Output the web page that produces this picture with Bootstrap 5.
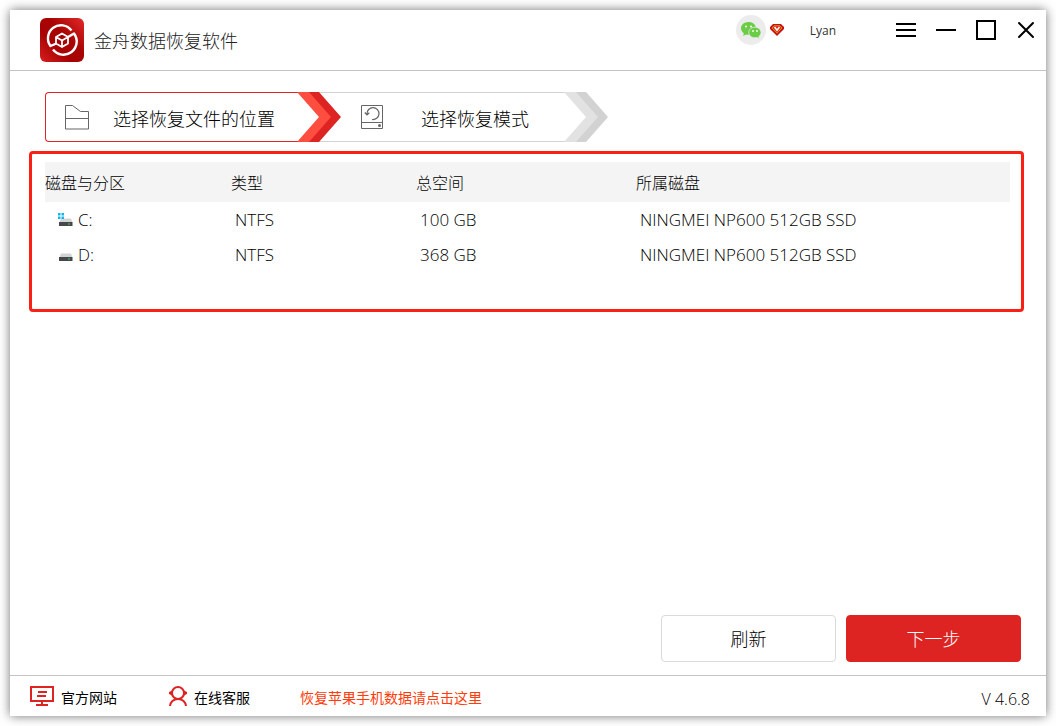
<!DOCTYPE html>
<html lang="zh-CN">
<head>
<meta charset="utf-8">
<meta name="viewport" content="width=device-width, initial-scale=1">
<title>金舟数据恢复软件</title>
<link rel="stylesheet" href="https://cdn.jsdelivr.net/npm/bootstrap@5.3.0/dist/css/bootstrap.min.css">
<style>
  body { font-family: "Open Sans", "Noto Sans CJK SC", sans-serif; font-size: 16px; color: #000; background: #fff; padding: 10px; }
  .zh-text { font-family: "Noto Sans CJK SC", sans-serif; font-weight: 300; }
  svg { display: block; flex: none; }
  .app-window { min-height: calc(100vh - 20px); background: #fff; box-shadow: 0 0 10px rgba(0, 0, 0, .55); }
  .title-bar { height: 61px; padding-left: 30px; border-bottom: 1px solid #c3c3c3; }
  .app-name { font-size: 18px; color: #222; margin-left: 10px; }
  .account-area { margin-right: 50px; height: 40px; }
  .avatar-disc { width: 30px; height: 30px; background: #ececec; }
  .user-name { font-size: 12px; color: #333; margin-left: 26px; padding-top: 2px; }
  .window-btn { width: 40px; height: 40px; }
  .app-main { padding: 21px 25px 13px 19px; }
  .step-bar { margin-left: 16px; height: 50px; }
  .step-item { height: 50px; font-size: 18px; border: 1px solid #d2d2d2; background: #fff; color: #000; }
  .step-current { width: 274px; padding-left: 19px; border-color: #dd2422; border-right: 0; border-radius: 4px 0 0 4px; }
  .step-next { width: 267px; padding-left: 42px; border-left: 0; border-right: 0; }
  .step-arrow { position: absolute; top: -1px; left: 100%; margin-left: -22px; z-index: 1; }
  .step-label { padding-top: 2px; }
  .step-current .step-label { margin-left: 23px; }
  .step-next .step-label { margin-left: 37px; }
  .disk-frame { margin-top: 9px; margin-right: -3px; min-height: 161px; border: 3px solid #fb2015; border-radius: 4px; padding: 8px 11px 8px 13px; }
  .disk-table { table-layout: fixed; }
  .disk-table th { height: 40px; background: #f4f4f4; font-weight: 300; padding: 0; vertical-align: middle; line-height: 24px; }
  .disk-table td { height: 35px; padding: 0 0 0 4px; vertical-align: middle; line-height: 24px; font-size: 17px; font-weight: 300; }
  .disk-table td:first-child { padding-left: 12px; }
  .drive-name { margin-left: 5px; }
  .col-part { width: 186px; }
  .col-kind { width: 185px; }
  .col-size { width: 220px; }
  .action-btn { width: 175px; height: 47px; font-size: 18px; border-radius: 4px; --bs-btn-font-weight: 300; }
  .action-row { gap: 10px; }
  .btn-refresh { --bs-btn-color: #000; --bs-btn-bg: #fff; --bs-btn-border-color: #dadada; --bs-btn-hover-bg: #f4f4f4; --bs-btn-hover-border-color: #dadada; }
  .btn-forward { --bs-btn-color: #fff; --bs-btn-bg: #dd2422; --bs-btn-border-color: #dd2422; --bs-btn-hover-bg: #c51d1b; --bs-btn-hover-color: #fff; --bs-btn-hover-border-color: #c51d1b; }
  .status-bar { height: 41px; padding: 0 16px 0 20px; border-top: 1px solid #c3c3c3; font-size: 14px; }
  .status-bar a { color: #000; text-decoration: none; }
  .status-bar a span, .promo-link { margin-left: 7px; padding-top: 2px; }
  .status-bar .support-link { margin-left: 52px; }
  .status-bar .promo-link { margin-left: 50px; color: #ff3c0a; }
  .version-label { font-size: 16px; font-weight: 300; padding-top: 6px; }
</style>
</head>
<body>
<div class="app-window d-flex flex-column">
  <header class="title-bar d-flex">
    <div class="d-flex align-items-center">
      <svg width="44" height="44" viewBox="0 0 44 44" aria-hidden="true">
        <defs><linearGradient id="logoFill" x1="0" y1="1" x2="1" y2="0"><stop offset="0" stop-color="#d91f20"/><stop offset=".35" stop-color="#a80304"/><stop offset=".6" stop-color="#a90404"/><stop offset="1" stop-color="#e42a2a"/></linearGradient></defs>
        <rect width="44" height="44" rx="6" fill="url(#logoFill)"/>
        <g fill="none" stroke="#fff" stroke-linejoin="round">
          <path d="M31.500 12.500A13 13 0 0 0 10.500 28L16.500 25.500M13 31.500A13 13 0 0 0 34 15.500L28 19" stroke-width="2.400"/>
          <path d="M22 15.500 28 19v6.500L22 29l-6-3.500V19zM16 19l6 3.500 6-3.500M22 22.500V29" stroke-width="1.800"/>
        </g>
      </svg>
      <span class="app-name zh-text">金舟数据恢复软件</span>
    </div>
    <div class="account-area d-flex align-items-center ms-auto">
      <div class="avatar-disc rounded-circle d-flex align-items-center justify-content-center">
        <svg width="20" height="18" viewBox="0 0 20 18" aria-hidden="true">
          <path d="M7.500 1C3.300 1 0 3.800 0 7.300c0 2 1.100 3.800 2.800 4.900L2.200 15l2.800-1.600c.8.2 1.700.3 2.500.3 4.200 0 7.500-2.800 7.500-6.400S11.700 1 7.500 1z" fill="#6bcc45"/>
          <path d="M14 6.200c-3.500 0-6.200 2.300-6.200 5.300s2.700 5.300 6.200 5.300c.7 0 1.400-.1 2-.3l2.300 1.400-.5-2.300c1.300-.9 2.200-2.400 2.200-4.100 0-3-2.700-5.300-6-5.300z" fill="#6bcc45" stroke="#ececec" stroke-width=".8"/>
          <g fill="#fff"><circle cx="5" cy="5.500" r="1"/><circle cx="10" cy="5.500" r="1"/><circle cx="12" cy="10" r=".9"/><circle cx="16" cy="10" r=".9"/></g>
        </svg>
      </div>
      <svg class="ms-1" width="14" height="12" viewBox="0 0 14 12" aria-hidden="true">
        <path d="M3 0h8l3 3v2L7 12 0 5V3z" fill="#c41212"/>
        <path d="M4 1.700h6L12 4 7 9.200 2 4z" fill="#d9301a" stroke="#ef9a1c" stroke-width=".8"/>
        <path d="M4.500 3 7 6.200 9.500 3" fill="none" stroke="#fff" stroke-width="1.500"/>
      </svg>
      <span class="user-name">Lyan</span>
    </div>
    <div class="d-flex">
      <button type="button" class="window-btn btn p-0 border-0 rounded-0" aria-label="菜单"><svg class="mx-auto" width="20" height="20" viewBox="0 0 20 20"><path d="M0 4h20M0 10h20M0 16h20" stroke="#000" stroke-width="2"/></svg></button>
      <button type="button" class="window-btn btn p-0 border-0 rounded-0" aria-label="最小化"><svg class="mx-auto" width="20" height="20" viewBox="0 0 20 20"><path d="M0 10h20" stroke="#000" stroke-width="2"/></svg></button>
      <button type="button" class="window-btn btn p-0 border-0 rounded-0" aria-label="最大化"><svg class="mx-auto" width="20" height="20" viewBox="0 0 20 20"><path d="M1 1h18v18H1z" fill="none" stroke="#000" stroke-width="2"/></svg></button>
      <button type="button" class="window-btn btn p-0 border-0 rounded-0" aria-label="关闭"><svg class="mx-auto" width="20" height="20" viewBox="0 0 20 20"><path d="M3 3l14 14M17 3L3 17" stroke="#000" stroke-width="2" stroke-linecap="round"/></svg></button>
    </div>
  </header>

  <main class="app-main flex-grow-1 d-flex flex-column">
    <div class="step-bar d-flex zh-text">
      <div class="step-item step-current position-relative d-flex align-items-center" aria-current="step">
        <svg width="25" height="25" viewBox="0 0 25 25" aria-hidden="true"><path d="M.5.500h7l8 6h8v17.500H.5zM.5 13.500h23" fill="none" stroke="#666"/></svg>
        <span class="step-label">选择恢复文件的位置</span>
        <svg class="step-arrow" width="44" height="50" viewBox="0 0 44 50" aria-hidden="true"><path d="M10 0h12l22 25-22 25H10l22-25z" fill="#dd2422"/><path d="M0 0h12l22 25-22 25H0l22-25z" fill="#ff4d40"/></svg>
      </div>
      <div class="step-item step-next position-relative d-flex align-items-center">
        <svg width="23" height="25" viewBox="0 0 23 25" aria-hidden="true"><path d="M.5.500h21v23H.5zM.5 17.500h21" fill="none" stroke="#666"/><path d="M6 9a6 6 0 1 1 5 5.500M3.800 7.500 6 10l2.300-2.200" fill="none" stroke="#666" stroke-width="1.200"/><circle cx="18.500" cy="20.500" r="1.500" fill="#666"/></svg>
        <span class="step-label">选择恢复模式</span>
        <svg class="step-arrow" width="44" height="50" viewBox="0 0 44 50" aria-hidden="true"><path d="M10 0h12l22 25-22 25H10l22-25z" fill="#d2d2d2"/><path d="M0 0h12l22 25-22 25H0l22-25z" fill="#e2e2e2"/></svg>
      </div>
    </div>

    <section class="disk-frame">
      <table class="disk-table w-100">
        <colgroup><col class="col-part"><col class="col-kind"><col class="col-size"><col></colgroup>
        <thead class="zh-text">
          <tr><th scope="col">磁盘与分区</th><th scope="col">类型</th><th scope="col">总空间</th><th scope="col">所属磁盘</th></tr>
        </thead>
        <tbody>
          <tr>
            <td><div class="d-flex align-items-center">
              <svg width="16" height="16" viewBox="0 0 16 16" aria-hidden="true"><path d="M4 6.500h10l1.500 4h-13z" fill="#d3d3d6"/><path d="M2 10h13.500v4H2z" fill="#45474b"/><path d="M11 11.500h2v1h-2z" fill="#30e045"/><path d="M1 1h2.500v2.500H1zM4.500 1H7v2.500H4.500zM1 4.500h2.500V7H1zM4.500 4.500H7V7H4.500z" fill="#11b5ee"/></svg>
              <span class="drive-name">C:</span></div></td>
            <td>NTFS</td><td>100 GB</td><td>NINGMEI NP600 512GB SSD</td>
          </tr>
          <tr>
            <td><div class="d-flex align-items-center">
              <svg width="16" height="16" viewBox="0 0 16 16" aria-hidden="true"><path d="M4 6.500h10l1.500 4h-13z" fill="#d3d3d6"/><path d="M2 10h13.500v4H2z" fill="#45474b"/><path d="M11 11.500h2v1h-2z" fill="#30e045"/></svg>
              <span class="drive-name">D:</span></div></td>
            <td>NTFS</td><td>368 GB</td><td>NINGMEI NP600 512GB SSD</td>
          </tr>
        </tbody>
      </table>
    </section>

    <div class="action-row d-flex justify-content-end mt-auto">
      <button type="button" class="action-btn btn btn-refresh zh-text p-0">刷新</button>
      <button type="button" class="action-btn btn btn-forward zh-text p-0">下一步</button>
    </div>
  </main>

  <footer class="status-bar d-flex align-items-center">
    <a href="#" class="d-flex align-items-center">
      <svg width="24" height="20" viewBox="0 0 24 20" aria-hidden="true"><path d="M1 1h22v14H1zM12 15v4M6 19h12M8 6h9M7 10h9" fill="none" stroke="#dd2422" stroke-width="2"/></svg>
      <span>官方网站</span>
    </a>
    <a href="#" class="support-link d-flex align-items-center">
      <svg width="18" height="20" viewBox="0 0 18 20" aria-hidden="true"><g fill="none" stroke="#dd2422" stroke-width="2"><circle cx="9" cy="7" r="6"/><path d="M1 20c.3-4 3.500-7 8-7s7.700 3 8 7"/></g><path d="M3 4.500v5L0 8V6zM15 4.500v5L18 8V6z" fill="#dd2422"/></svg>
      <span>在线客服</span>
    </a>
    <a href="#" class="promo-link">恢复苹果手机数据请点击这里</a>
    <div class="version-label ms-auto">V 4.6.8</div>
  </footer>
</div>
<script src="https://cdn.jsdelivr.net/npm/bootstrap@5.3.0/dist/js/bootstrap.bundle.min.js"></script>
</body>
</html>
